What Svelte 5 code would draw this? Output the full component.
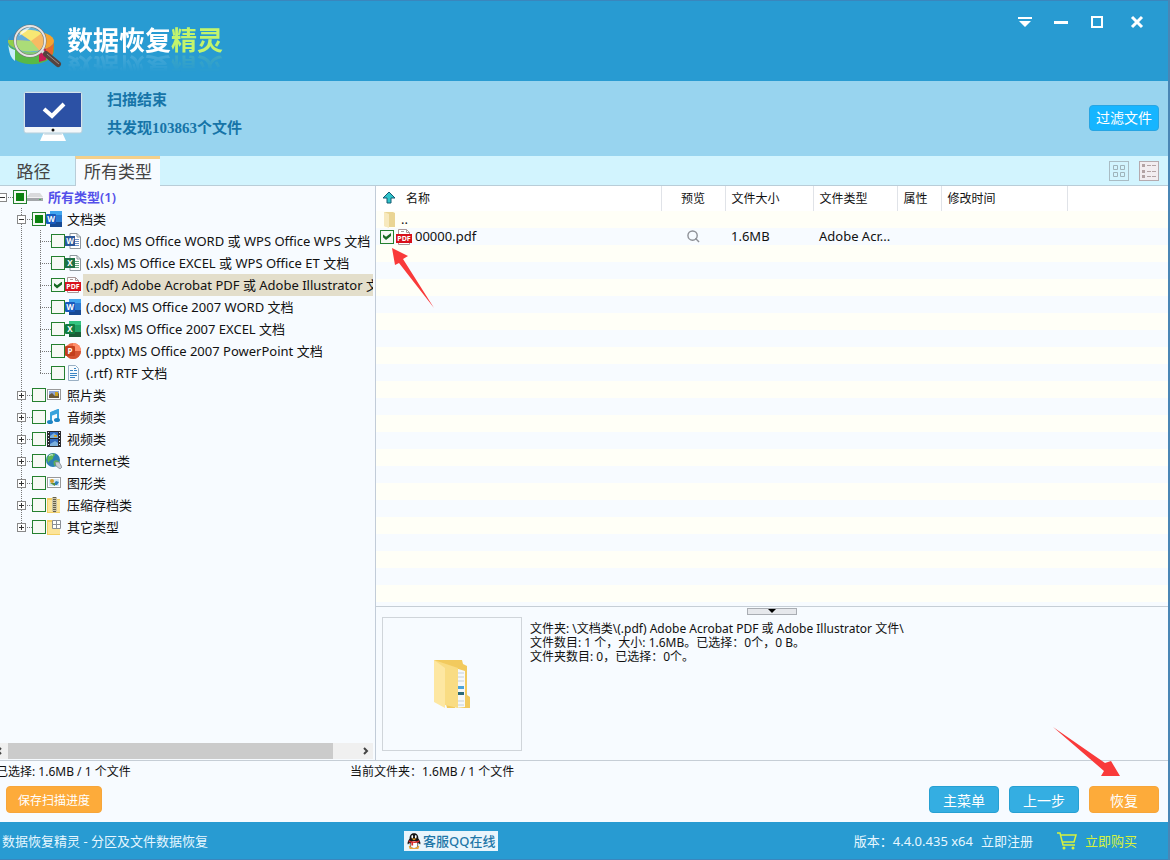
<script lang="ts">
  interface Node {
    level: number
    label: string
    icon: string
    check?: 'on' | 'part'
    box?: '+' | '-'
    last?: boolean
    selected?: boolean
  }

  const nodes: Node[] = [
    { level: 0, label: '所有类型(1)', icon: 'drive', check: 'part', box: '-' },
    { level: 1, label: '文档类', icon: 'docx', check: 'part', box: '-' },
    { level: 2, label: '(.doc) MS Office WORD 或 WPS Office WPS 文档', icon: 'doc' },
    { level: 2, label: '(.xls) MS Office EXCEL 或 WPS Office ET 文档', icon: 'xls' },
    { level: 2, label: '(.pdf) Adobe Acrobat PDF 或 Adobe Illustrator 文件', icon: 'pdf', check: 'on', selected: true },
    { level: 2, label: '(.docx) MS Office 2007 WORD 文档', icon: 'docx' },
    { level: 2, label: '(.xlsx) MS Office 2007 EXCEL 文档', icon: 'xlsx' },
    { level: 2, label: '(.pptx) MS Office 2007 PowerPoint 文档', icon: 'pptx' },
    { level: 2, label: '(.rtf) RTF 文档', icon: 'rtf', last: true },
    { level: 1, label: '照片类', icon: 'photo', box: '+' },
    { level: 1, label: '音频类', icon: 'music', box: '+' },
    { level: 1, label: '视频类', icon: 'film', box: '+' },
    { level: 1, label: 'Internet类', icon: 'globe', box: '+' },
    { level: 1, label: '图形类', icon: 'shapes', box: '+' },
    { level: 1, label: '压缩存档类', icon: 'zip', box: '+' },
    { level: 1, label: '其它类型', icon: 'other', box: '+', last: true },
  ]

  let tab = $state('types')
  let view = $state('list')
</script>

{#snippet icon(name: string)}
  <svg class="icon" viewBox="0 0 16 16" aria-hidden="true">
    {#if name === 'drive'}
      <path d="M3 4h10l3 4H0z" fill="#d9dadc" />
      <path d="M0 8h16v4H0z" fill="#a3a6aa" />
      <path d="M0 8h16v1H0z" fill="#f2f2f2" />
      <path d="M12 10h2v1h-2z" fill="#45b65a" />
    {:else if name === 'docx' || name === 'xlsx'}
      {@const word = name === 'docx'}
      <rect x="4" y="0" width="12" height="16" rx="1" fill={word ? '#2b7cd3' : '#21a366'} />
      <path d="M4 0h12v4H4z" fill={word ? '#41a5ee' : '#33c481'} />
      <path d="M4 11h12v5H4z" fill={word ? '#174a94' : '#185c37'} />
      <rect x="0" y="3" width="10" height="10" rx="1" fill={word ? '#185abd' : '#107c41'} />
      <text x="5" y="11" text-anchor="middle" font-size="8" font-weight="700" fill="#fff">{word ? 'W' : 'X'}</text>
    {:else if name === 'pptx'}
      <circle cx="8" cy="8" r="8" fill="#ed6c47" />
      <path d="M8 0a8 8 0 0 1 8 8H8z" fill="#ff8f6b" />
      <path d="M0 8h16a8 8 0 0 1-16 0z" fill="#d35230" />
      <rect x="0" y="3" width="10" height="10" rx="1" fill="#c43e1c" />
      <text x="5" y="11" text-anchor="middle" font-size="8" font-weight="700" fill="#fff">P</text>
    {:else if name === 'doc' || name === 'xls'}
      {@const word = name === 'doc'}
      <path d="M5 .5h7l3.500 3.500v11.500H5z" fill="#fff" stroke="#8f989f" />
      <path d="M12 .5V4h3.500" fill="none" stroke="#8f989f" />
      <path d="M10 6.500h4M10 8.500h4M10 10.500h4M10 12.500h4" stroke={word ? '#6b8fc4' : '#63a67f'} />
      <rect x="0" y="3" width="10" height="10" fill={word ? '#2b579a' : '#1e7145'} />
      <text x="5" y="11" text-anchor="middle" font-size="8" font-weight="700" fill="#fff">{word ? 'W' : 'X'}</text>
    {:else if name === 'pdf'}
      <path d="M2.500.5h8l3 3v12h-11z" fill="#fff" stroke="#a99" />
      <path d="M10.500.5v3h3M5 2.500h3" fill="none" stroke="#a99" />
      <rect x="0" y="5" width="16" height="9" fill="#d8101c" />
      <text x="8" y="12" text-anchor="middle" font-size="7" font-weight="700" fill="#fff">PDF</text>
    {:else if name === 'rtf'}
      <path d="M3.500.5h7l3 3v12h-10z" fill="#f6fbff" stroke="#9ab0c4" />
      <path d="M5 5.500h3M5 8.500h7M5 10.500h7M5 12.500h5M9 3.500h2M9 5.500h3" stroke="#3a85c4" />
    {:else if name === 'photo' || name === 'shapes'}
      <rect x="1.500" y="2.500" width="13" height="10" fill="#fff" stroke="#999" />
      {#if name === 'photo'}
        <path d="M3 4h10v7H3z" fill="#8fa6d8" />
        <path d="M3 8l3-2 3 3 4-3v5H3z" fill="#6a5a3c" />
        <path d="M9 5h3v4H9z" fill="#c9a021" />
      {:else}
        <path d="M3 4h10v7H3z" fill="#cfe6f4" />
        <circle cx="6" cy="6" r="2" fill="#d9a02c" />
        <path d="M7 10l3-4 3 1-2 3z" fill="#2f80b8" />
        <path d="M4 8h5v3z" fill="#5a8f3b" />
      {/if}
    {:else if name === 'music'}
      <path d="M5 13V4l7-3v9" fill="none" stroke="#3aa3dc" stroke-width="2" />
      <path d="M5 3l8-3v4L5 7z" fill="#3aa3dc" />
      <ellipse cx="4" cy="13" rx="3" ry="2" fill="#1f85c4" />
      <ellipse cx="11" cy="11" rx="3" ry="2" fill="#1f85c4" />
    {:else if name === 'film'}
      <rect x="1" y="0" width="14" height="16" fill="#2a2a2e" />
      <path d="M4 1h8v6H4zM4 8h8v7H4z" fill="#2f69bd" />
      <path d="M4 5l4-3 4 3v2H4zM4 13l5-3 3 2v3H4z" fill="#7bb0dc" />
      <path d="M8 4h3v2H8z" fill="#d3a42e" />
      <path d="M2.500 1v15M13.500 1v15" stroke="#eee" stroke-dasharray="1 2" />
    {:else if name === 'globe'}
      <circle cx="7" cy="7" r="7" fill="#2b7fb5" />
      <path d="M2 3c2-3 6-3 7-2 0 2-2 2-2 4S3 7 3 9 0 7 2 3zM8 8c3-2 5 0 5 1s-3 4-4 4-2-3-1-5z" fill="#5fb552" />
      <path d="M3 3q2-2 4-1" fill="none" stroke="#d9f1ff" />
      <path d="M9 9h4l3 5-2 2-4-3z" fill="#c6ccd2" stroke="#69727b" stroke-width=".6" />
    {:else if name === 'zip' || name === 'other'}
      <path d="M1 1h6l1 1h6v14H1z" fill="#f3cf63" />
      <path d="M2 3h12v12H2z" fill="#fce49a" />
      {#if name === 'zip'}
        <path d="M6 0h5v14l-2 2-3-2z" fill="#c9c3a8" />
        <path d="M8.500 0v15" stroke="#66604a" stroke-width="3" stroke-dasharray="1 1" />
      {:else}
        <path d="M6.500 1.500h8v8h-8zM10.500 1.500v8M6.500 5.500h8" fill="#fff" stroke="#8a8f96" />
      {/if}
    {:else if name === 'folder'}
      <path d="M2 0h9l2 1v14H6L2 14z" fill="#ead594" />
      <path d="M2 0l5 2v14l-5-2z" fill="#f7e9bd" />
    {/if}
  </svg>
{/snippet}

<div class="window">
  <header class="titlebar">
    <div class="brand">
      <svg class="logo" viewBox="0 0 58 52" aria-hidden="true">
        <path d="M2 22a23 10 0 0 0 46 0v9c-2 17-40 18-44 1z" fill="#58b947" />
        <path d="M2 22c0 5 3 7 7 8v11c-4-3-6-7-7-19z" fill="#c9eefb" />
        <path d="M35 30c8-2 13-5 13-9l-1 13-9 6z" fill="#e8672c" />
        <path d="M33 31l7-3v12l-7 2z" fill="#c81d57" />
        <ellipse cx="25" cy="21" rx="23" ry="10" fill="#f5a32f" />
        <path d="M25 21L2 20q1-6 10-8z" fill="#2f92cc" />
        <path d="M25 21L12 12q12-5 24 1z" fill="#f6df45" />
        <path d="M25 21L2 20c0 9 18 14 31 10z" fill="#8fd04b" />
        <circle cx="24" cy="21" r="15" fill="#fff" fill-opacity=".25" stroke="#777" stroke-width="3" />
        <circle cx="24" cy="21" r="15" fill="none" stroke="#e6e6e6" stroke-width="2" />
        <path d="M13 16q3-8 12-9-5 5-12 9z" fill="#fff" opacity=".7" />
        <path d="M36 31l5 4" stroke="#ddd" stroke-width="3" />
        <path d="M40 34l12 10" stroke="#55433f" stroke-width="6" stroke-linecap="round" />
        <path d="M41 34l12 10" stroke="#a08c86" stroke-width="1" />
      </svg>
      <h1>数据恢复<em>精灵</em></h1>
    </div>
    <div class="controls">
      <button aria-label="菜单">
        <svg viewBox="0 0 14 14"><path d="M0 2h14v2H0zM1 6h12l-6 6z" /></svg>
      </button>
      <button aria-label="最小化">
        <svg viewBox="0 0 14 14"><path d="M0 6h14v3H0z" /></svg>
      </button>
      <button aria-label="最大化">
        <svg viewBox="0 0 14 14"><path d="M1 1h12v12H1zM3 3v8h8V3z" fill-rule="evenodd" /></svg>
      </button>
      <button class="close" aria-label="关闭">
        <svg viewBox="0 0 14 14"><path d="M2 2l10 10M12 2L2 12" stroke="#fff" stroke-width="3" /></svg>
      </button>
    </div>
  </header>

  <section class="banner">
    <svg class="monitor" viewBox="0 0 60 52" aria-hidden="true">
      <path d="M21 41h18l4 9H17z" fill="#fff" />
      <path d="M22 41h16l1 3H21z" fill="#d9e4ea" />
      <rect x="1" y="1" width="58" height="41" rx="2" fill="#f4f8fa" stroke="#b5cfdc" />
      <path d="M2 2h56v34H2z" fill="#2c51a5" />
      <circle cx="30" cy="39" r="1.500" fill="#111" />
      <path d="M21 18l8 7 12-12" fill="none" stroke="#fff" stroke-width="4" />
    </svg>
    <div class="summary">
      <p>扫描结束</p>
      <p>共发现103863个文件</p>
    </div>
    <button class="filter">过滤文件</button>
  </section>

  <nav class="tabs">
    <button class:active={tab === 'path'} onclick={() => (tab = 'path')}>路径</button>
    <button class:active={tab === 'types'} onclick={() => (tab = 'types')}>所有类型</button>
    <div class="views">
      <button class:on={view === 'grid'} aria-label="图标视图" onclick={() => (view = 'grid')}>
        <svg viewBox="0 0 18 18"><path d="M3.500 3.500h4v4h-4zM10.500 3.500h4v4h-4zM3.500 10.500h4v4h-4zM10.500 10.500h4v4h-4z" fill="none" stroke="#9fb3ba" /></svg>
      </button>
      <button class:on={view === 'list'} aria-label="列表视图" onclick={() => (view = 'list')}>
        <svg viewBox="0 0 18 18">
          <path d="M2 2h3v3H2zM2 8h3v3H2zM2 13h3v3H2z" fill="#b3a3a4" />
          <path d="M7 3.500h9M7 9.500h9M7 14.500h9" stroke="#b3a3a4" stroke-dasharray="4 1" />
        </svg>
      </button>
    </div>
  </nav>

  <main>
    <aside>
      <ul class="tree">
        {#each nodes as n, i}
          <li>
            {#if n.level > 0}<span class="rail"></span>{/if}
            {#if n.level > 1}<span class="rail line"></span>{/if}
            <span class="joint" class:line={n.level > 0} class:last={n.last}>
              {#if n.box}
                <button class="box" class:plus={n.box === '+'} aria-label={n.box === '+' ? '展开' : '折叠'}></button>
              {/if}
            </span>
            <label for="node-{i}" class:root={n.level === 0} class:selected={n.selected}>
              <input id="node-{i}" type="checkbox" checked={n.check === 'on'} class:part={n.check === 'part'} />
              {@render icon(n.icon)}
              <span class="text">{n.label}</span>
            </label>
          </li>
        {/each}
      </ul>
      <div class="hscroll">
        <button aria-label="向左"><svg viewBox="0 0 8 8"><path d="M5 1L2 4l3 3" /></svg></button>
        <div class="track"><div class="thumb"></div></div>
        <button aria-label="向右"><svg viewBox="0 0 8 8"><path d="M3 1l3 3-3 3" /></svg></button>
      </div>
    </aside>

    <section class="content">
      <div class="files">
        <table>
          <colgroup>
            <col class="c-name" /><col class="c-preview" /><col class="c-size" /><col class="c-type" />
            <col class="c-attr" /><col class="c-time" /><col />
          </colgroup>
          <thead>
            <tr>
              <th>
                <div class="cell head">
                  <svg class="up" viewBox="0 0 14 14" aria-hidden="true">
                    <path d="M7 1l6 6H9v5H5V7H1z" fill="#2fc3c9" stroke="#155a73" />
                  </svg>
                  名称
                </div>
              </th>
              <th class="mid">预览</th>
              <th>文件大小</th>
              <th>文件类型</th>
              <th>属性</th>
              <th>修改时间</th>
              <th></th>
            </tr>
          </thead>
          <tbody>
            <tr>
              <td><div class="cell">{@render icon('folder')}<span>..</span></div></td>
              <td></td><td></td><td></td><td></td><td></td><td></td>
            </tr>
            <tr>
              <td>
                <label class="cell" for="file-0">
                  <input id="file-0" type="checkbox" checked />
                  {@render icon('pdf')}
                  <span>00000.pdf</span>
                </label>
              </td>
              <td class="mid">
                <button class="look" aria-label="预览">
                  <svg viewBox="0 0 14 14"><circle cx="6" cy="6" r="5" /><path d="M9 9l4 4" /></svg>
                </button>
              </td>
              <td>1.6MB</td>
              <td>Adobe Acr...</td>
              <td></td><td></td><td></td>
            </tr>
          </tbody>
        </table>
        <svg class="pointer check" viewBox="0 0 42 60" aria-hidden="true">
          <path d="M0 0l16 8-5 3 31 49L7 15l-4 2z" />
        </svg>
      </div>

      <div class="details">
        <button class="splitter" aria-label="收起"><svg viewBox="0 0 10 5"><path d="M1 0h8L5 4z" /></svg></button>
        <div class="thumbnail">
          <svg viewBox="0 0 38 50" aria-hidden="true">
            <path d="M1 1h28l1 4 4 2v29l3 2v11H14z" fill="#f2ca5e" />
            <path d="M22 9l10 3v36l-10 1z" fill="#f5f8fa" />
            <path d="M25 14h6M25 18h6M25 22h6M25 42h6M25 46h6" stroke="#c5d0d8" />
            <path d="M25 27h6v3h-6z" fill="#4ba3d8" />
            <path d="M25 33h6v3h-6z" fill="#2b6a78" />
            <path d="M1 1l24 8v40l-13-3V13z" fill="#f9dc83" />
            <path d="M1 1l11 8v40L1 43z" fill="#fde7a2" />
          </svg>
        </div>
        <div class="info">
          <p>文件夹: \文档类\(.pdf) Adobe Acrobat PDF 或 Adobe Illustrator 文件\</p>
          <p>文件数目: 1 个，大小: 1.6MB。已选择：0个，0 B。</p>
          <p>文件夹数目: 0，已选择：0个。</p>
        </div>
      </div>
    </section>
  </main>

  <div class="status">
    <span>已选择: 1.6MB / 1 个文件</span>
    <span>当前文件夹：1.6MB / 1 个文件</span>
  </div>

  <div class="actions">
    <button class="save orange">保存扫描进度</button>
    <button>主菜单</button>
    <button>上一步</button>
    <button class="orange">恢复</button>
    <svg class="pointer recover" viewBox="0 0 67 49" aria-hidden="true">
      <path d="M0 0l52 36 6-2 9 15H48l3-5z" />
    </svg>
  </div>

  <footer>
    <span class="product">数据恢复精灵 - 分区及文件数据恢复</span>
    <a class="qq" href="#qq">
      <svg viewBox="0 0 16 18" aria-hidden="true">
        <path d="M2 15q3-3 6 1 3-4 6-1l-1 3H3z" fill="#e8a33a" />
        <path d="M8 0c4 0 5 3 5 6 2 3 3 5 2 7l-2-2c0 4-2 6-5 6s-5-2-5-6l-2 2C0 11 1 9 3 6c0-3 1-6 5-6z" fill="#151515" />
        <ellipse cx="8" cy="13" rx="4" ry="4" fill="#fff" />
        <ellipse cx="6" cy="4" rx="1" ry="2" fill="#fff" />
        <ellipse cx="10" cy="4" rx="1" ry="2" fill="#fff" />
        <path d="M5 6h6l-3 2z" fill="#f0a020" />
        <path d="M2 8q6 3 12 0v2q-4 2-7 1v3H5v-3l-3-1z" fill="#d92b2b" />
      </svg>
      客服QQ在线
    </a>
    <span class="version">版本：4.4.0.435 x64</span>
    <a class="register" href="#register">立即注册</a>
    <a class="buy" href="#buy">
      <svg viewBox="0 0 20 18" aria-hidden="true">
        <path d="M0 1h3l3 12h12M4 3h15l-2 7H5" fill="none" stroke="#d8f23c" stroke-width="1.500" />
        <circle cx="7" cy="16" r="1.500" fill="#d8f23c" />
        <circle cx="16" cy="16" r="1.500" fill="#d8f23c" />
      </svg>
      立即购买
    </a>
  </footer>
</div>

<style>
  :global(body) { margin: 0; }

  .window {
    box-sizing: border-box;
    display: flex;
    flex-direction: column;
    min-height: 100vh;
    border-right: 2px solid #4a86b5;
    background: #f7fbff;
    color: #111;
    font-family: "Noto Sans", "Noto Sans CJK SC", sans-serif;
    font-size: 13px;
    overflow: hidden;
  }
  .window :global(*) { box-sizing: border-box; }
  button { font: inherit; border: 0; padding: 0; background: none; cursor: pointer; }
  p, h1, ul { margin: 0; padding: 0; }
  a { text-decoration: none; }
  .icon { width: 16px; height: 16px; flex: none; }

  .titlebar {
    display: flex;
    justify-content: space-between;
    height: 81px;
    background: #289bd2;
    border-top: 1px solid #3a86bd;
  }
  .brand { display: flex; align-items: flex-start; gap: 3px; padding: 19px 0 0 6px; }
  .logo { width: 58px; height: 52px; }
  h1 {
    font-size: 26px;
    line-height: 40px;
    font-weight: 700;
    color: #fff;
    -webkit-box-reflect: below -12px linear-gradient(transparent 40%, rgba(0, 0, 0, 0.2));
  }
  h1 em { font-style: normal; color: #c3f46c; }

  .controls { display: flex; padding-right: 13px; }
  .controls button {
    display: grid;
    place-items: center;
    width: 36px;
    height: 42px;
  }
  .controls .close { margin-left: 4px; }
  .controls svg { width: 14px; height: 14px; fill: #fff; }

  .banner {
    display: flex;
    align-items: flex-start;
    height: 75px;
    padding: 10px 9px 0 23px;
    background: #98d4ef;
  }
  .monitor { width: 60px; height: 52px; }
  .summary {
    flex: 1;
    margin-left: 24px;
    color: #1674a8;
    font: 700 15px/18px "Liberation Serif", "Noto Sans CJK SC", serif;
  }
  .summary p + p { margin-top: 10px; }
  .filter {
    width: 70px;
    height: 26px;
    margin-top: 14px;
    border: 1px solid #27a5e3;
    border-radius: 4px;
    background: #16b5ff;
    color: #fff;
    font-size: 14px;
    line-height: 22px;
  }

  .tabs {
    display: flex;
    height: 30px;
    background: #d2f4fe;
    border-bottom: 1px solid #b9cdd8;
  }
  .tabs > button {
    height: 30px;
    padding: 0 8px 2px;
    color: #444;
    font-size: 17px;
    line-height: 24px;
    border-top: 3px solid transparent;
  }
  .tabs > button:first-child { width: 75px; padding-right: 16px; }
  .tabs > button.active {
    background: #f7fbff;
    border-top-color: #f4d08a;
    border-left: 1px solid #b9cdd8;
  }
  .views { display: flex; gap: 10px; margin: 5px 9px 0 auto; }
  .views button { width: 20px; height: 20px; border: 1px solid #a9bcc4; }
  .views button.on { background: #f2edf0; border-color: #b5aaae; }
  .views svg { display: block; width: 18px; height: 18px; }

  main { flex: 1; display: flex; min-height: 0; border-bottom: 1px solid #c6ced6; }

  aside {
    flex: 0 0 376px;
    min-width: 0;
    display: flex;
    flex-direction: column;
    justify-content: space-between;
    padding: 0 2px 1px 0;
    border-right: 1px solid #c2ccd8;
  }
  .tree { list-style: none; overflow: hidden; }
  .tree li { display: flex; height: 22px; }
  .rail { flex: 0 0 19px; }
  .joint { flex: 0 0 13px; display: flex; align-items: center; }
  .line, .joint {
    --dots-y: repeating-linear-gradient(#777 0 1px, transparent 1px 2px);
    --dots-x: repeating-linear-gradient(90deg, #777 0 1px, transparent 1px 2px);
  }
  .joint { background: var(--dots-x) 2px 11px / 100% 1px no-repeat; }
  .rail.line { background: var(--dots-y) 2px 0 / 1px 100% no-repeat; }
  .joint.line {
    background:
      var(--dots-x) 2px 11px / 100% 1px no-repeat,
      var(--dots-y) 2px 0 / 1px 100% no-repeat;
  }
  .joint.last {
    background:
      var(--dots-x) 2px 11px / 100% 1px no-repeat,
      var(--dots-y) 2px 0 / 1px 50% no-repeat;
  }
  .box {
    width: 9px;
    height: 9px;
    margin: 1px 0 0 -2px;
    border: 1px solid #888;
    background: linear-gradient(#333, #333) 1px 3px / 5px 1px no-repeat, #fff;
  }
  .box.plus {
    background:
      linear-gradient(#333, #333) 1px 3px / 5px 1px no-repeat,
      linear-gradient(#333, #333) 3px 1px / 1px 5px no-repeat,
      #fff;
  }

  label { display: flex; align-items: center; white-space: nowrap; }
  .tree label { flex: 1; min-width: 0; }
  .tree .icon { margin-right: 2px; }
  .tree .text {
    flex: 1;
    padding-left: 3px;
    line-height: 22px;
    overflow: hidden;
  }
  .selected .text { background: #e3decb; }
  .root .text { color: #5450ea; font-weight: 600; }

  input[type="checkbox"] {
    appearance: none;
    display: grid;
    place-items: center;
    flex: none;
    width: 14px;
    height: 14px;
    margin: 0;
    border: 1px solid #24802f;
    background: #f6f9f4;
  }
  input.part::after {
    content: "";
    width: 8px;
    height: 8px;
    background: #0c820f;
  }
  input:checked::after {
    content: "";
    width: 8px;
    height: 7px;
    background: #176b21;
    clip-path: polygon(0 20%, 38% 55%, 100% 0, 100% 42%, 38% 100%, 0 62%);
  }

  .hscroll { display: flex; height: 16px; margin-top: 8px; background: #f0f0f0; }
  .hscroll button { width: 16px; display: grid; place-items: center; }
  .hscroll button:first-child { width: 8px; margin-left: -4px; margin-right: 4px; }
  .hscroll svg { width: 8px; height: 8px; fill: none; stroke: #444; stroke-width: 2; }
  .track { flex: 1; }
  .thumb { width: 93%; height: 100%; background: #cbcbcb; }

  .content { flex: 1; min-width: 0; display: flex; flex-direction: column; }
  .files {
    position: relative;
    flex: 1;
    background: repeating-linear-gradient(#fffff7 0 17px, #f7fbff 17px 34px) 0 25px;
  }
  table { width: 100%; table-layout: fixed; border-collapse: collapse; }
  .c-name { width: 285px; }
  .c-preview { width: 64px; }
  .c-size { width: 88px; }
  .c-type { width: 84px; }
  .c-attr { width: 44px; }
  .c-time { width: 126px; }
  thead { background: #fff; }
  th {
    height: 25px;
    padding: 0 6px 2px;
    font-size: 12px;
    font-weight: 400;
    text-align: left;
    border-right: 1px solid #e0e3e8;
  }
  th:first-child { padding: 0 0 2px 4px; }
  th:last-child { border-right: 0; }
  .mid { text-align: center; }
  td { height: 17px; padding: 0 6px; line-height: 17px; white-space: nowrap; }
  td:first-child { padding: 0 0 0 4px; }
  .cell { display: flex; align-items: center; height: 17px; }
  .head { gap: 10px; padding-left: 2px; }
  .up { width: 14px; height: 14px; }
  .cell .icon { margin: 0 3px 0 2px; }
  .look { display: block; margin: 0 auto; height: 14px; }
  .look svg { display: block; width: 13px; height: 13px; fill: none; stroke: #8d9096; stroke-width: 1.500; }

  .pointer { position: absolute; fill: #f93a3a; pointer-events: none; }
  .pointer.check { left: 16px; top: 62px; width: 42px; height: 60px; }
  .pointer.recover { right: 48px; bottom: 46px; width: 67px; height: 49px; }

  .details {
    position: relative;
    display: flex;
    gap: 8px;
    padding: 10px 6px 9px;
    border-top: 1px solid #c6ced6;
  }
  .splitter {
    position: absolute;
    top: 1px;
    left: 50%;
    width: 50px;
    height: 7px;
    margin-left: -25px;
    border: 1px solid #a9adb3;
    background: #e6e8ec;
  }
  .splitter svg { display: block; width: 10px; height: 5px; margin: 0 auto; }
  .thumbnail {
    display: grid;
    place-items: center;
    width: 140px;
    height: 134px;
    border: 1px solid #d0d5da;
  }
  .thumbnail svg { width: 38px; height: 50px; }
  .info { padding-top: 5px; font-size: 12px; line-height: 14px; }

  .status { display: flex; height: 22px; font-size: 12px; line-height: 22px; }
  .status span:first-child { flex: 0 0 354px; margin-left: -4px; }

  .actions {
    position: relative;
    display: flex;
    gap: 10px;
    padding: 3px 9px 9px 6px;
  }
  .actions button {
    width: 70px;
    height: 27px;
    border: 1px solid #27a0d2;
    border-radius: 4px;
    background: #34aee2;
    color: #fff;
    font-size: 14px;
  }
  .actions .orange { background: #fdab3a; border-color: #f7a63a; }
  .actions .save { width: 96px; margin-right: auto; font-size: 12px; }

  footer {
    display: flex;
    align-items: center;
    height: 38px;
    padding: 0 31px 0 2px;
    background: #289bd2;
    border-bottom: 1px solid #3a86bd;
    color: #e6f7ff;
  }
  footer a { color: inherit; }
  .product { flex: 0 0 402px; }
  .qq {
    display: flex;
    align-items: center;
    gap: 2px;
    height: 20px;
    padding: 0 3px;
    background: #e9f5fc;
    font-weight: 500;
  }
  footer .qq { color: #1f77a8; }
  .qq svg { width: 14px; height: 16px; }
  .version { margin-left: auto; }
  .register { margin-left: 8px; }
  .buy { display: flex; align-items: center; gap: 8px; margin-left: 24px; }
  footer .buy { color: #d8f23c; }
  .buy svg { width: 20px; height: 18px; }
</style>
